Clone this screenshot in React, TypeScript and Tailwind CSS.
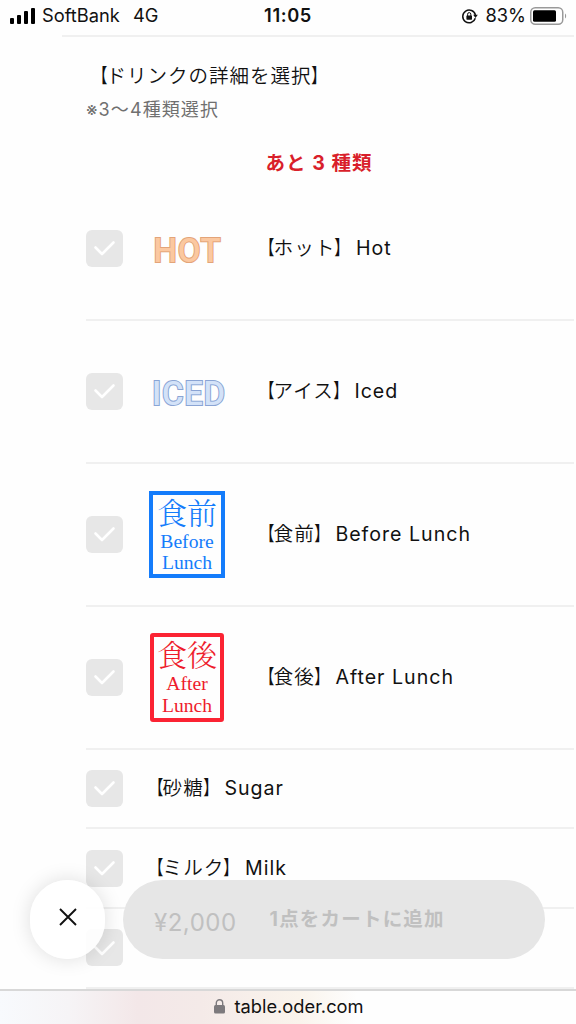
import React from 'react';

type Option = {
    label: string;
    art?: React.ReactNode;
};

// brackets are condensed towards the kana, latin runs are set one step heavier
const JaText: React.FC<{ children: string }> = ({ children }) => (
    <>
        {children.split(/([【】]|[A-Za-z ]+)/).map((part, i) => {
            if (part === '【') return <span key={i} className="inline-block leading-none font-normal font-['Noto_Sans_CJK_JP',sans-serif] origin-[92%_50%] translate-x-[2px] scale-x-[.75]">{part}</span>;
            if (part === '】') return <span key={i} className="inline-block leading-none font-normal font-['Noto_Sans_CJK_JP',sans-serif] origin-[4%_50%] translate-x-[-1px] scale-x-[.75]">{part}</span>;
            if (/[A-Za-z]/.test(part)) return <span key={i} className="font-normal">{part}</span>;
            return part;
        })}
    </>
);

const Stamp: React.FC<{ kanji: string; lines: string[]; className: string; lineClass: string }> = ({ kanji, lines, className, lineClass }) => (
    <div className={`flex flex-col items-center ${className}`}>
        <span className="font-['Noto_Serif_CJK_JP','Noto_Sans_CJK_JP',serif] text-[30px] leading-[36px] h-[36px] relative top-[-2px] whitespace-nowrap">{kanji}</span>
        {lines.map((line) => (
            <span key={line} className={`font-['Liberation_Serif',serif] font-normal text-[19.6px] whitespace-nowrap ${lineClass}`}>{line}</span>
        ))}
    </div>
);

const options: Option[] = [
    {
        label: '【ホット】Hot',
        art: (
            <svg width="76" height="40" viewBox="0 0 76 40" className="mt-[3px]">
                <text x="4.5" y="32" textLength="67" className="font-['Roboto',sans-serif] font-medium text-[33px] fill-[#fbc8a0] stroke-[#e3a479] stroke-2 [paint-order:stroke]">HOT</text>
            </svg>
        ),
    },
    {
        label: '【アイス】Iced',
        art: (
            <svg width="76" height="40" viewBox="0 0 76 40" className="mt-[3px]">
                <text x="3" y="32" textLength="73" className="font-['Roboto',sans-serif] font-medium text-[33px] fill-[#d3e2f8] stroke-[#8aa4d4] stroke-2 [paint-order:stroke]">ICED</text>
            </svg>
        ),
    },
    {
        label: '【食前】Before Lunch',
        art: <Stamp kanji="食前" lines={['Before', 'Lunch']} className="w-[76px] h-[87px] border-4 border-[#147cfb] text-[#147cfb]" lineClass="leading-[21px]" />,
    },
    {
        label: '【食後】After Lunch',
        art: <Stamp kanji="食後" lines={['After', 'Lunch']} className="w-[74px] h-[89px] border-4 border-[#fb2333] rounded-[3px] text-[#ee1c2c]" lineClass="leading-[22px]" />,
    },
    { label: '【砂糖】Sugar' },
    { label: '【ミルク】Milk' },
    { label: '' },
];

const Checkbox = () => (
    <div className="size-[37px] shrink-0 rounded-[6px] bg-[#e7e7e7] flex items-center justify-center">
        <svg width="23" height="18" viewBox="0 0 23 18" fill="none" stroke="#fff" strokeWidth="2.6" strokeLinecap="round" strokeLinejoin="round">
            <path d="M2.5 8.5 9 15 20.5 3.5" />
        </svg>
    </div>
);

const OptionRow: React.FC<{ option: Option }> = ({ option }) => (
    <div className={`flex items-center border-b-2 border-[#f0f0f0] ${option.art ? 'h-[142.9px]' : 'h-[79.7px]'}`}>
        <Checkbox />
        {option.art && <div className="ml-[26px] w-[76px] shrink-0 flex justify-center">{option.art}</div>}
        <span className={`pt-px text-[19.6px] tracking-[1px] whitespace-nowrap ${option.art ? 'ml-[28px]' : 'ml-[19px]'}`}>
            <JaText>{option.label}</JaText>
        </span>
    </div>
);

const StatusBar = () => (
    <header className="h-[35px] shrink-0 flex items-center pl-[10px] pr-[9px] relative text-[18.3px] font-normal pb-[3px]">
        <div className="flex items-end gap-[3px]">
            <i className="w-1 h-[6px] rounded-[1px] bg-black" />
            <i className="w-1 h-[9px] rounded-[1px] bg-black" />
            <i className="w-1 h-[13px] rounded-[1px] bg-black" />
            <i className="w-1 h-[16px] rounded-[1px] bg-black" />
        </div>
        <span className="ml-[7px]">SoftBank</span>
        <span className="ml-[13px]">4G</span>
        <span className="absolute left-1/2 -translate-x-1/2 font-semibold tracking-[0.6px]">11:05</span>
        <div className="ml-auto flex items-center">
            <svg width="17" height="17" viewBox="0 0 17 17" fill="none" stroke="#111" strokeWidth="1.5">
                <path d="M14.3 10.2A6.4 6.4 0 1 1 14.4 7" />
                <path d="M12.2 6.8h4.6l-2.3 3.2z" fill="#111" stroke="none" />
                <rect x="5.4" y="7.4" width="5.6" height="4.3" rx=".6" fill="#111" stroke="none" />
                <path d="M6.6 8V6.2a1.6 1.6 0 0 1 3.2 0V8" strokeWidth="1" />
            </svg>
            <span className="ml-[7px]">83%</span>
            <svg width="37" height="18" viewBox="0 0 37 18" className="ml-1">
                <rect x=".75" y=".75" width="32" height="16.5" rx="4.5" fill="none" stroke="#999" strokeWidth="1.5" />
                <rect x="3" y="3.3" width="23" height="11.4" rx="1.5" />
                <path d="M35 6.5c1.5.7 1.5 4.3 0 5z" fill="#999" />
            </svg>
        </div>
    </header>
);

const App: React.FC = () => {
    return (
        <div className="w-[576px] h-[1024px] overflow-hidden relative flex flex-col bg-[#fefefe] text-[#111] font-[350] font-['Inter','Noto_Sans_CJK_JP',sans-serif]">
            <StatusBar />
            <main className="h-[954px] shrink-0 overflow-hidden pl-[62px] pr-[2px]">
                <div className="border-t-2 border-[#f0f0f0] pl-6">
                    <h2 className="mt-[24px] h-[30px] leading-[30px] text-[19.5px] tracking-[1px] whitespace-nowrap font-[350]">
                        <JaText>【ドリンクの詳細を選択】</JaText>
                    </h2>
                    <p className="mt-[4px] h-[30px] leading-[30px] text-[18px] tracking-[1.1px] font-normal text-[#707070] whitespace-nowrap">※3〜4種類選択</p>
                    <p className="mt-[23px] h-[30px] leading-[30px] mr-[22px] text-center text-[19.5px] tracking-[1px] font-bold text-[#d91f2b]">あと 3 種類</p>
                    {options.map((option, i) => (
                        <OptionRow key={i} option={option} />
                    ))}
                </div>
            </main>

            {/* floating cart controls */}
            <div className="absolute left-[30px] top-[880px] flex items-center gap-[18px]">
                <button className="w-[75px] h-[79px] rounded-full bg-white/90 shadow-[0_0_20px_rgba(0,0,0,0.13)] flex items-center justify-center pb-[5px]">
                    <svg width="18" height="18" viewBox="0 0 18 18" fill="none" stroke="#111" strokeWidth="1.9">
                        <path d="m1 1 16 16M17 1 1 17" />
                    </svg>
                </button>
                <button className="w-[422px] h-[79px] rounded-full bg-[#e6e6e6] text-[#c0c0c0] flex items-center pl-[31px] whitespace-nowrap">
                    <span className="text-[24px] tracking-[0.5px] font-normal relative top-[3px]">¥2,000</span>
                    <span className="ml-[33px] text-[19.5px] tracking-[1.2px] font-bold">1点をカートに追加</span>
                </button>
            </div>

            <footer className="flex-1 border-t-2 border-[#d8d8d8] bg-[linear-gradient(90deg,#f8fafd_0%,#f6f4f6_12%,#f3e7e8_24%,#f4eae8_35%,#faf4ec_52%,#fefefe_62%)] flex items-center justify-center gap-[9px] pb-[2px] pl-[2px] text-[18.3px] font-normal">
                <svg width="11" height="15" viewBox="0 0 11 15">
                    <rect y="6" width="11" height="8.5" rx="1.5" fill="#7d7a7d" />
                    <path d="M2.3 7V4a3.2 3.2 0 0 1 6.4 0v3" fill="none" stroke="#7d7a7d" strokeWidth="1.4" />
                </svg>
                <span>table.oder.com</span>
            </footer>
        </div>
    );
};

export default App;
